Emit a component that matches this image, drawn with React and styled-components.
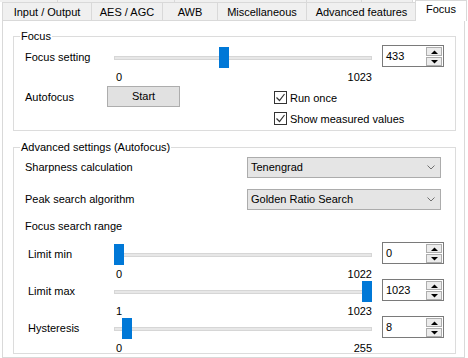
import styled, { createGlobalStyle } from "styled-components";

const GlobalStyle = createGlobalStyle`
  html, body {
    margin: 0;
    padding: 0;
    background: #ffffff;
  }
  body {
    font-family: "Liberation Sans", Arial, sans-serif;
    font-size: 11px;
    color: #000000;
  }
  * {
    box-sizing: border-box;
  }
`;

const SWindow = styled.div`
  width: 468px;
  height: 358px;
  overflow: hidden;
  background: #ffffff;
`;

/* tab strip */
const STabStrip = styled.div`
  height: 20px;
`;

const SUpperRow = styled.div`
  display: flex;
  height: 2px;
`;

const SUpperCell = styled.div`
  width: ${(p) => p.$w}px;
  background: #f0f0f0;
  border-right: 1px solid #d9d9d9;
`;

const STabRow = styled.div`
  display: flex;
  align-items: flex-start;
  height: 18px;
  padding-left: 2px;
`;

const STab = styled.div`
  width: ${(p) => p.$w}px;
  height: 18px;
  line-height: 18px;
  text-align: center;
  white-space: nowrap;
  background: #f0f0f0;
  border-top: 1px solid #d9d9d9;
  border-left: 1px solid #d9d9d9;
`;

const SActiveTab = styled.div`
  position: relative;
  z-index: 1;
  width: 52px;
  height: 21px;
  margin: -2px 0 -1px -1px;
  line-height: 17px;
  text-align: center;
  background: #ffffff;
  border: 1px solid #d9d9d9;
  border-bottom: none;
`;

const SPanel = styled.div`
  margin-left: 2px;
  width: 463px;
  height: 338px;
  padding: 0 8px 0 10px;
  background: #ffffff;
  border: 1px solid #d9d9d9;
`;

/* group boxes */
const SGroup = styled.fieldset`
  margin: ${(p) => p.$top}px 0 0 0;
  padding: 0;
  border: 1px solid #dcdcdc;
  min-width: 0;
`;

const SLegend = styled.legend`
  margin-left: 6px;
  padding: 0 1px;
  line-height: 14px;
`;

const SGroupBody = styled.div`
  display: flex;
  flex-direction: column;
  padding: ${(p) => p.$top}px 0 ${(p) => p.$bottom}px 11px;
`;

/* rows */
const SSliderRow = styled.div`
  display: grid;
  grid-template-columns: 82px 275px 62px;
  align-items: start;
  height: ${(p) => p.$h}px;
  margin-top: ${(p) => p.$top || 0}px;
`;

const SLabel = styled.div`
  padding: 2px 0 0 ${(p) => p.$indent || 0}px;
  line-height: 21px;
  white-space: nowrap;
`;

const SSection = styled.div`
  margin-top: 6px;
  line-height: 21px;
`;

const SDropRow = styled.div`
  display: grid;
  grid-template-columns: 222px 194px;
  align-items: center;
  margin-top: ${(p) => p.$top}px;
  line-height: 21px;
`;

const SAutoRow = styled.div`
  display: flex;
  align-items: flex-start;
`;

const SAutoLabel = styled.div`
  width: 82px;
  padding-top: 2px;
  line-height: 21px;
`;

const SButton = styled.div`
  width: 73px;
  height: 21px;
  margin-top: 1px;
  line-height: 19px;
  text-align: center;
  background: #e1e1e1;
  border: 1px solid #adadad;
`;

const SChecks = styled.div`
  display: flex;
  flex-direction: column;
  gap: 8px;
  margin-left: 94px;
  padding-top: 6px;
`;

const SCheckRow = styled.div`
  display: flex;
  align-items: center;
  gap: 3px;
  height: 13px;
  white-space: nowrap;
`;

const SBox = styled.span`
  display: flex;
  align-items: center;
  justify-content: center;
  width: 13px;
  height: 13px;
  background: #ffffff;
  border: 1px solid #333333;
`;

/* slider */
const SSlider = styled.div`
  width: 272px;
  margin-top: 2px;
`;

const STrackArea = styled.div`
  position: relative;
  display: flex;
  align-items: center;
  height: 21px;
  padding: 0 7px;
`;

const STrack = styled.div`
  flex: 1;
  height: 4px;
  background: #e7e7e7;
  border: 1px solid #d6d6d6;
`;

const SThumb = styled.div`
  position: absolute;
  top: 0;
  width: 10px;
  height: 21px;
  background: #0078d7;
`;

const SScale = styled.div`
  display: flex;
  justify-content: space-between;
  margin-top: 2px;
  padding: 0 7px 0 9px;
  line-height: 14px;
`;

/* numeric up/down */
const SSpin = styled.div`
  display: flex;
  width: 62px;
  height: 22px;
  background: #ffffff;
  border: 1px solid #7a7a7a;
`;

const SSpinValue = styled.div`
  flex: 1;
  padding-left: 3px;
  line-height: 20px;
`;

const SSpinButtons = styled.div`
  display: flex;
  flex-direction: column;
  gap: 1px;
  width: 17px;
  padding: 1px 1px 0 0;
`;

const SSpinButton = styled.div`
  flex: 1;
  display: flex;
  align-items: center;
  justify-content: center;
  background: #ececec;
  border: 1px solid #adadad;
`;

/* combo box */
const SSelect = styled.div`
  display: flex;
  align-items: center;
  justify-content: space-between;
  width: 194px;
  height: 21px;
  padding-left: 3px;
  line-height: 19px;
  background: #e5e5e5;
  border: 1px solid #acacac;
`;

const SChevron = styled.span`
  display: flex;
  justify-content: center;
  width: 19px;
`;

function Slider({ min, max, value }) {
  const left = 7 + ((value - min) / (max - min)) * 248;
  return (
    <SSlider>
      <STrackArea>
        <STrack />
        <SThumb style={{ left }} />
      </STrackArea>
      <SScale>
        <span>{min}</span>
        <span>{max}</span>
      </SScale>
    </SSlider>
  );
}

function Spin({ value }) {
  return (
    <SSpin>
      <SSpinValue>{value}</SSpinValue>
      <SSpinButtons>
        <SSpinButton>
          <svg width="7" height="4" viewBox="0 0 7 4">
            <polygon points="0,4 3.5,0.5 7,4" fill="#000" />
          </svg>
        </SSpinButton>
        <SSpinButton>
          <svg width="7" height="4" viewBox="0 0 7 4">
            <polygon points="0,0 3.5,3.5 7,0" fill="#000" />
          </svg>
        </SSpinButton>
      </SSpinButtons>
    </SSpin>
  );
}

function Select({ value }) {
  return (
    <SSelect>
      <span>{value}</span>
      <SChevron>
        <svg width="8" height="5" viewBox="0 0 8 5">
          <polyline points="0.5,0.5 4,4 7.5,0.5" fill="none" stroke="#707070" strokeWidth="1" />
        </svg>
      </SChevron>
    </SSelect>
  );
}

function Check({ children }) {
  return (
    <SCheckRow>
      <SBox>
        <svg width="11" height="11" viewBox="0 0 11 11">
          <polyline points="1.5,5.5 4.5,8.5 9.5,2" fill="none" stroke="#333" strokeWidth="1.2" />
        </svg>
      </SBox>
      {children}
    </SCheckRow>
  );
}

function SliderRow({ label, indent, min, max, value, h, top }) {
  return (
    <SSliderRow $h={h} $top={top}>
      <SLabel $indent={indent}>{label}</SLabel>
      <Slider min={min} max={max} value={value} />
      <Spin value={value} />
    </SSliderRow>
  );
}

const tabs = [
  { name: "Input / Output", w: 89 },
  { name: "AES / AGC", w: 71 },
  { name: "AWB", w: 55 },
  { name: "Miscellaneous", w: 89 },
  { name: "Advanced features", w: 110 },
];

const upperCells = [58, 117, 132, 55, 51];

const limits = [
  { label: "Limit min", min: 0, max: 1022, value: 0 },
  { label: "Limit max", min: 1, max: 1023, value: 1023 },
  { label: "Hysteresis", min: 0, max: 255, value: 8 },
];

export default function App() {
  return (
    <SWindow>
      <GlobalStyle />
      <STabStrip>
        <SUpperRow>
          {upperCells.map((w, i) => (
            <SUpperCell key={i} $w={w} />
          ))}
        </SUpperRow>
        <STabRow>
          {tabs.map((t) => (
            <STab key={t.name} $w={t.w}>
              {t.name}
            </STab>
          ))}
          <SActiveTab>Focus</SActiveTab>
        </STabRow>
      </STabStrip>
      <SPanel>
        <SGroup $top={8}>
          <SLegend>Focus</SLegend>
          <SGroupBody $top={2} $bottom={5}>
            <SliderRow label="Focus setting" min={0} max={1023} value={433} h={40} />
            <SAutoRow>
              <SAutoLabel>Autofocus</SAutoLabel>
              <SButton>Start</SButton>
              <SChecks>
                <Check>Run once</Check>
                <Check>Show measured values</Check>
              </SChecks>
            </SAutoRow>
          </SGroupBody>
        </SGroup>
        <SGroup $top={9}>
          <SLegend>Advanced settings (Autofocus)</SLegend>
          <SGroupBody $top={0} $bottom={0}>
            <SDropRow $top={3}>
              <span>Sharpness calculation</span>
              <Select value="Tenengrad" />
            </SDropRow>
            <SDropRow $top={11}>
              <span>Peak search algorithm</span>
              <Select value="Golden Ratio Search" />
            </SDropRow>
            <SSection>Focus search range</SSection>
            {limits.map((l, i) => (
              <SliderRow key={l.label} {...l} indent={3} h={37} top={i === 0 ? 5 : 0} />
            ))}
          </SGroupBody>
        </SGroup>
      </SPanel>
    </SWindow>
  );
}
